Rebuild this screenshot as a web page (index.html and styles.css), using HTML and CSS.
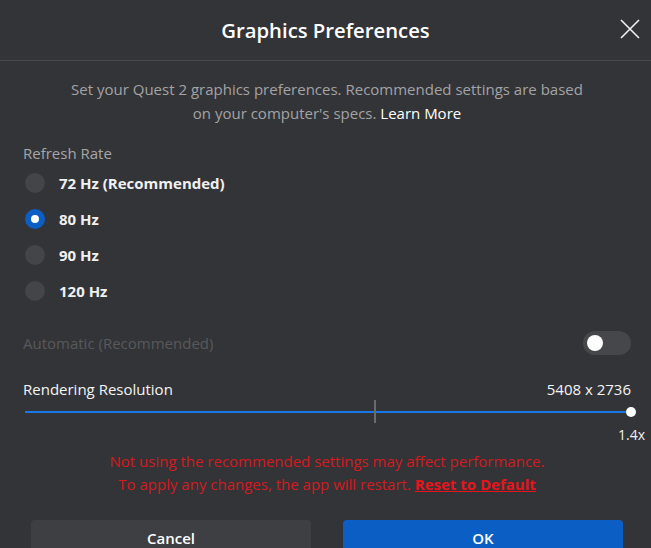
FILE: index.html
```html
<!DOCTYPE html>
<html lang="en">
<head>
  <meta charset="UTF-8">
  <title>Graphics Preferences</title>
  <link rel="stylesheet" href="styles.css">
</head>
<body>
  <div class="dialog">
    <div class="header">
      <h1>Graphics Preferences</h1>
      <button class="close" aria-label="Close">
        <svg width="20" height="20" viewBox="0 0 20 20"><path d="M1 1L19 19M19 1L1 19" stroke="#f2f2f2" stroke-width="1.6" fill="none"/></svg>
      </button>
    </div>

    <div class="content">
      <p class="desc">Set your Quest 2 graphics preferences. Recommended settings are based<br>on your computer's specs. <a href="#">Learn More</a></p>

      <div class="label">Refresh Rate</div>
      <div class="radios">
        <label class="radio"><span class="dot"></span>72 Hz (Recommended)</label>
        <label class="radio checked"><span class="dot"></span>80 Hz</label>
        <label class="radio"><span class="dot"></span>90 Hz</label>
        <label class="radio"><span class="dot"></span>120 Hz</label>
      </div>

      <div class="auto-row">
        <span>Automatic (Recommended)</span>
        <span class="toggle"><span class="knob"></span></span>
      </div>

      <div class="res-row">
        <span>Rendering Resolution</span>
        <span>5408 x 2736</span>
      </div>
      <div class="slider">
        <div class="track"></div>
        <div class="tick"></div>
        <div class="thumb"></div>
      </div>
      <div class="scale">1.4x</div>

      <p class="warn">Not using the recommended settings may affect performance.<br>To apply any changes, the app will restart. <a href="#">Reset to Default</a></p>
    </div>

    <div class="buttons">
      <button class="btn cancel">Cancel</button>
      <button class="btn ok">OK</button>
    </div>
  </div>
</body>
</html>
```

FILE: styles.css
```css
body {
  margin: 0;
  background: #333437;
  font-family: 'Open Sans', sans-serif;
  color: #fff;
}
.dialog {
  width: 651px;
  height: 548px;
  overflow: hidden;
}
.header {
  position: relative;
  height: 60px;
  border-bottom: 1px solid #48494c;
  display: flex;
  align-items: center;
  justify-content: center;
}
.header h1 {
  margin: 0;
  font-size: 20.3px;
  font-weight: 600;
  color: #fff;
}
.close {
  position: absolute;
  right: 11px;
  top: 19px;
  background: none;
  border: none;
  padding: 0;
  width: 20px;
  height: 20px;
}
.content {
  padding: 0 20px 0 23px;
}
.desc {
  margin: 16px 0 0;
  text-align: center;
  font-size: 15px;
  line-height: 24px;
  color: #a3a3a5;
}
.desc a {
  color: #fff;
  text-decoration: none;
}
.label {
  margin-top: 18px;
  font-size: 15px;
  line-height: 20px;
  color: #a6a6a8;
}
.radios {
  margin-top: 2px;
}
.radio {
  display: flex;
  align-items: center;
  height: 36px;
  font-size: 15px;
  font-weight: 700;
  color: #f0f0f0;
}
.radio .dot {
  width: 20px;
  height: 20px;
  border-radius: 50%;
  background: #444548;
  margin: 0 14px 0 2px;
  box-sizing: border-box;
}
.radio.checked .dot {
  background: #fff;
  border: 6px solid #0b5fc4;
}
.auto-row {
  margin-top: 22px;
  height: 24px;
  display: flex;
  align-items: center;
  justify-content: space-between;
  font-size: 15px;
  color: #58595c;
}
.toggle {
  width: 48px;
  height: 24px;
  border-radius: 12px;
  background: #46474a;
  display: flex;
  align-items: center;
  padding-left: 4px;
  box-sizing: border-box;
}
.knob {
  width: 16px;
  height: 16px;
  border-radius: 50%;
  background: #fff;
}
.res-row {
  margin-top: 24px;
  display: flex;
  justify-content: space-between;
  font-size: 15px;
  line-height: 20px;
  color: #f5f5f5;
}
.slider {
  position: relative;
  height: 25px;
  margin-left: 2px;
}
.track {
  position: absolute;
  left: 0;
  right: 0;
  top: 12px;
  height: 2px;
  background: #1a78e6;
}
.tick {
  position: absolute;
  left: 349px;
  top: 1px;
  width: 2px;
  height: 23px;
  background: #6a6b6e;
}
.thumb {
  position: absolute;
  right: -5px;
  top: 8px;
  width: 10px;
  height: 10px;
  border-radius: 50%;
  background: #fff;
}
.scale {
  text-align: right;
  margin-right: -14px;
  font-size: 14px;
  line-height: 18px;
  margin-top: 2px;
  color: #f0f0f0;
}
.warn {
  margin: 6px 0 0;
  text-align: center;
  font-size: 15px;
  line-height: 23px;
  color: #d41a1f;
}
.warn a {
  color: #e8141c;
  font-weight: 700;
}
.buttons {
  display: flex;
  gap: 32px;
  padding: 0 28px 0 31px;
  margin-top: 24px;
}
.btn {
  flex: 1;
  height: 36px;
  border: none;
  border-radius: 4px;
  font-family: inherit;
  font-size: 15px;
  font-weight: 600;
  color: #fff;
}
.cancel {
  background: #3e3f42;
}
.ok {
  background: #0b5fc4;
}
```
